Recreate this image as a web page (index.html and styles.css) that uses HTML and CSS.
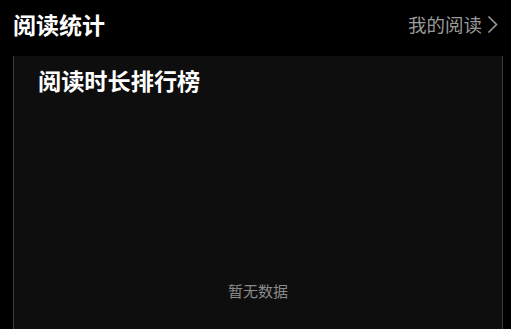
FILE: index.html
```html
<!DOCTYPE html>
<html lang="zh">
<head>
<meta charset="utf-8">
<link rel="stylesheet" href="styles.css">
</head>
<body>
<div class="page">
  <header class="header">
    <h1 class="title">阅读统计</h1>
    <a class="more">我的阅读
      <svg class="chev" width="11" height="19" viewBox="0 0 11 19"><path d="M1.5 1.5 L9.5 9.5 L1.5 17.5" fill="none" stroke="#9a9a9a" stroke-width="1.6"/></svg>
    </a>
  </header>
  <section class="card">
    <h2 class="card-title">阅读时长排行榜</h2>
    <div class="empty">暂无数据</div>
  </section>
</div>
</body>
</html>
```
FILE: styles.css
```css
html, body {
  margin: 0;
  padding: 0;
  background: #000;
  height: 100%;
  overflow: hidden;
}
body {
  font-family: "Noto Sans CJK SC", "Noto Sans", sans-serif;
  color: #fff;
}
.page {
  width: 511px;
  height: 329px;
  display: flex;
  flex-direction: column;
}
.header {
  height: 50px;
  display: flex;
  align-items: center;
  justify-content: space-between;
  padding: 0 13px 0 13px;
  flex-shrink: 0;
}
.title {
  margin: 0;
  font-size: 23px;
  font-weight: 700;
  line-height: 1;
  margin-top: -2px;
}
.more {
  display: flex;
  align-items: center;
  gap: 5px;
  color: #9a9a9a;
  font-size: 18.5px;
  margin-top: -2px;
}
.chev { display: block; }
.card {
  margin: 6px 8px 0 13px;
  flex: 1;
  background: #0e0e0e;
  border-left: 1px solid #3c3c3c;
  border-right: 1px solid #3c3c3c;
  display: flex;
  flex-direction: column;
  padding: 7px 24px 0 24px;
}
.card-title {
  margin: 0;
  font-size: 23.2px;
  font-weight: 700;
  line-height: 34px;
}
.empty {
  margin-top: auto;
  margin-bottom: 28px;
  text-align: center;
  font-size: 15px;
  color: #8a8a8a;
}
```
